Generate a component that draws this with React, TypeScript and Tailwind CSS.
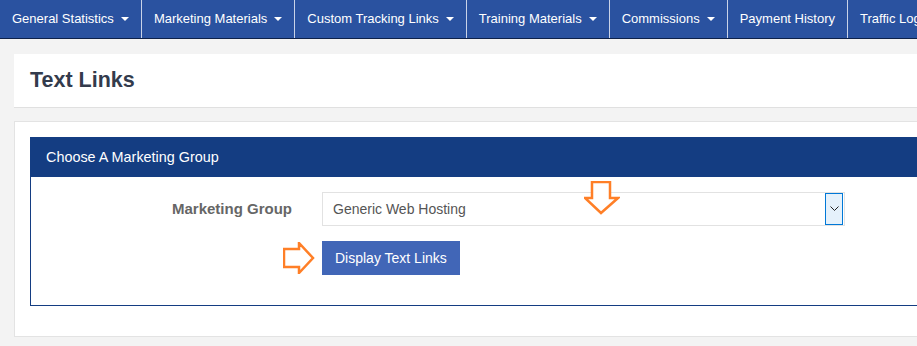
const navItems = [
  { label: 'General Statistics', caret: true },
  { label: 'Marketing Materials', caret: true },
  { label: 'Custom Tracking Links', caret: true },
  { label: 'Training Materials', caret: true },
  { label: 'Commissions', caret: true },
  { label: 'Payment History', caret: false },
  { label: 'Traffic Log', caret: false },
];

function Caret() {
  return (
    <span className="ml-[7px] inline-block w-0 h-0 border-l-[4px] border-r-[4px] border-t-[4px] border-l-transparent border-r-transparent border-t-white" />
  );
}

function DownArrow() {
  return (
    <svg className="absolute left-[553px] top-[4px]" width="36" height="34" viewBox="0 0 36 34">
      <polygon
        points="8,1 26,1 26,17 34,17 17,32 1,17 8,17"
        fill="white"
        stroke="#ff7f27"
        strokeWidth="2.5"
        strokeLinejoin="miter"
      />
    </svg>
  );
}

function RightArrow() {
  return (
    <svg className="absolute left-[252px] top-[65px]" width="32" height="32" viewBox="0 0 32 32">
      <polygon
        points="1,7 16,7 16,1 30,16 16,31 16,25 1,25"
        fill="white"
        stroke="#ff7f27"
        strokeWidth="2.5"
        strokeLinejoin="miter"
      />
    </svg>
  );
}

export default function App() {
  return (
    <div className="w-[917px] h-[346px] overflow-hidden bg-[#f3f3f3] font-['Liberation_Sans',Arial,sans-serif]">
      {/* Top navigation */}
      <nav className="flex h-[39px] bg-[#2a52a0] border-b border-[#0d2149] whitespace-nowrap">
        {navItems.map((item) => (
          <div
            key={item.label}
            className="flex items-center px-3 border-r border-[#c9d3e8] text-white text-[13px] shrink-0"
          >
            <span>{item.label}</span>
            {item.caret && <Caret />}
          </div>
        ))}
      </nav>

      <div className="w-[1000px] pl-[14px] pt-[15px]">
        {/* Page header */}
        <div className="h-[54px] bg-white border-b border-[#e0e0e0] flex items-center px-4">
          <h1 className="text-[21.5px] font-bold text-[#333b4c]">Text Links</h1>
        </div>

        {/* Card */}
        <div className="mt-[13px] bg-white border border-[#e3e3e3] p-[15px]">
          <div className="border border-[#143d82] mb-[15px]">
            <div className="h-[39px] bg-[#143d82] px-[15px] flex items-center text-white text-[14.4px]">
              Choose A Marketing Group
            </div>
            <div className="relative px-[15px] pt-[15px] pb-[30px]">
              <div className="flex items-center">
                <label className="w-[246px] text-right font-bold text-[15px] text-[#666]">
                  Marketing Group
                </label>
                <div className="ml-[30px] w-[523px] h-[34px] border border-[#e2e2e2] flex items-center justify-between pl-[10px] pr-px">
                  <span className="text-[14px] text-[#555]">Generic Web Hosting</span>
                  <span className="w-[18px] h-[32px] bg-[#e5f1fb] border border-[#0078d7] flex items-center justify-center">
                    <svg width="9" height="6" viewBox="0 0 9 6">
                      <path d="M0.5 0.5 L4.5 4.5 L8.5 0.5" fill="none" stroke="#222" strokeWidth="1" />
                    </svg>
                  </span>
                </div>
              </div>
              <div className="mt-[15px] ml-[276px]">
                <button className="h-[34px] px-[13px] bg-[#4166b7] text-white text-[14px]">
                  Display Text Links
                </button>
              </div>
              <DownArrow />
              <RightArrow />
            </div>
          </div>
        </div>
      </div>
    </div>
  );
}
